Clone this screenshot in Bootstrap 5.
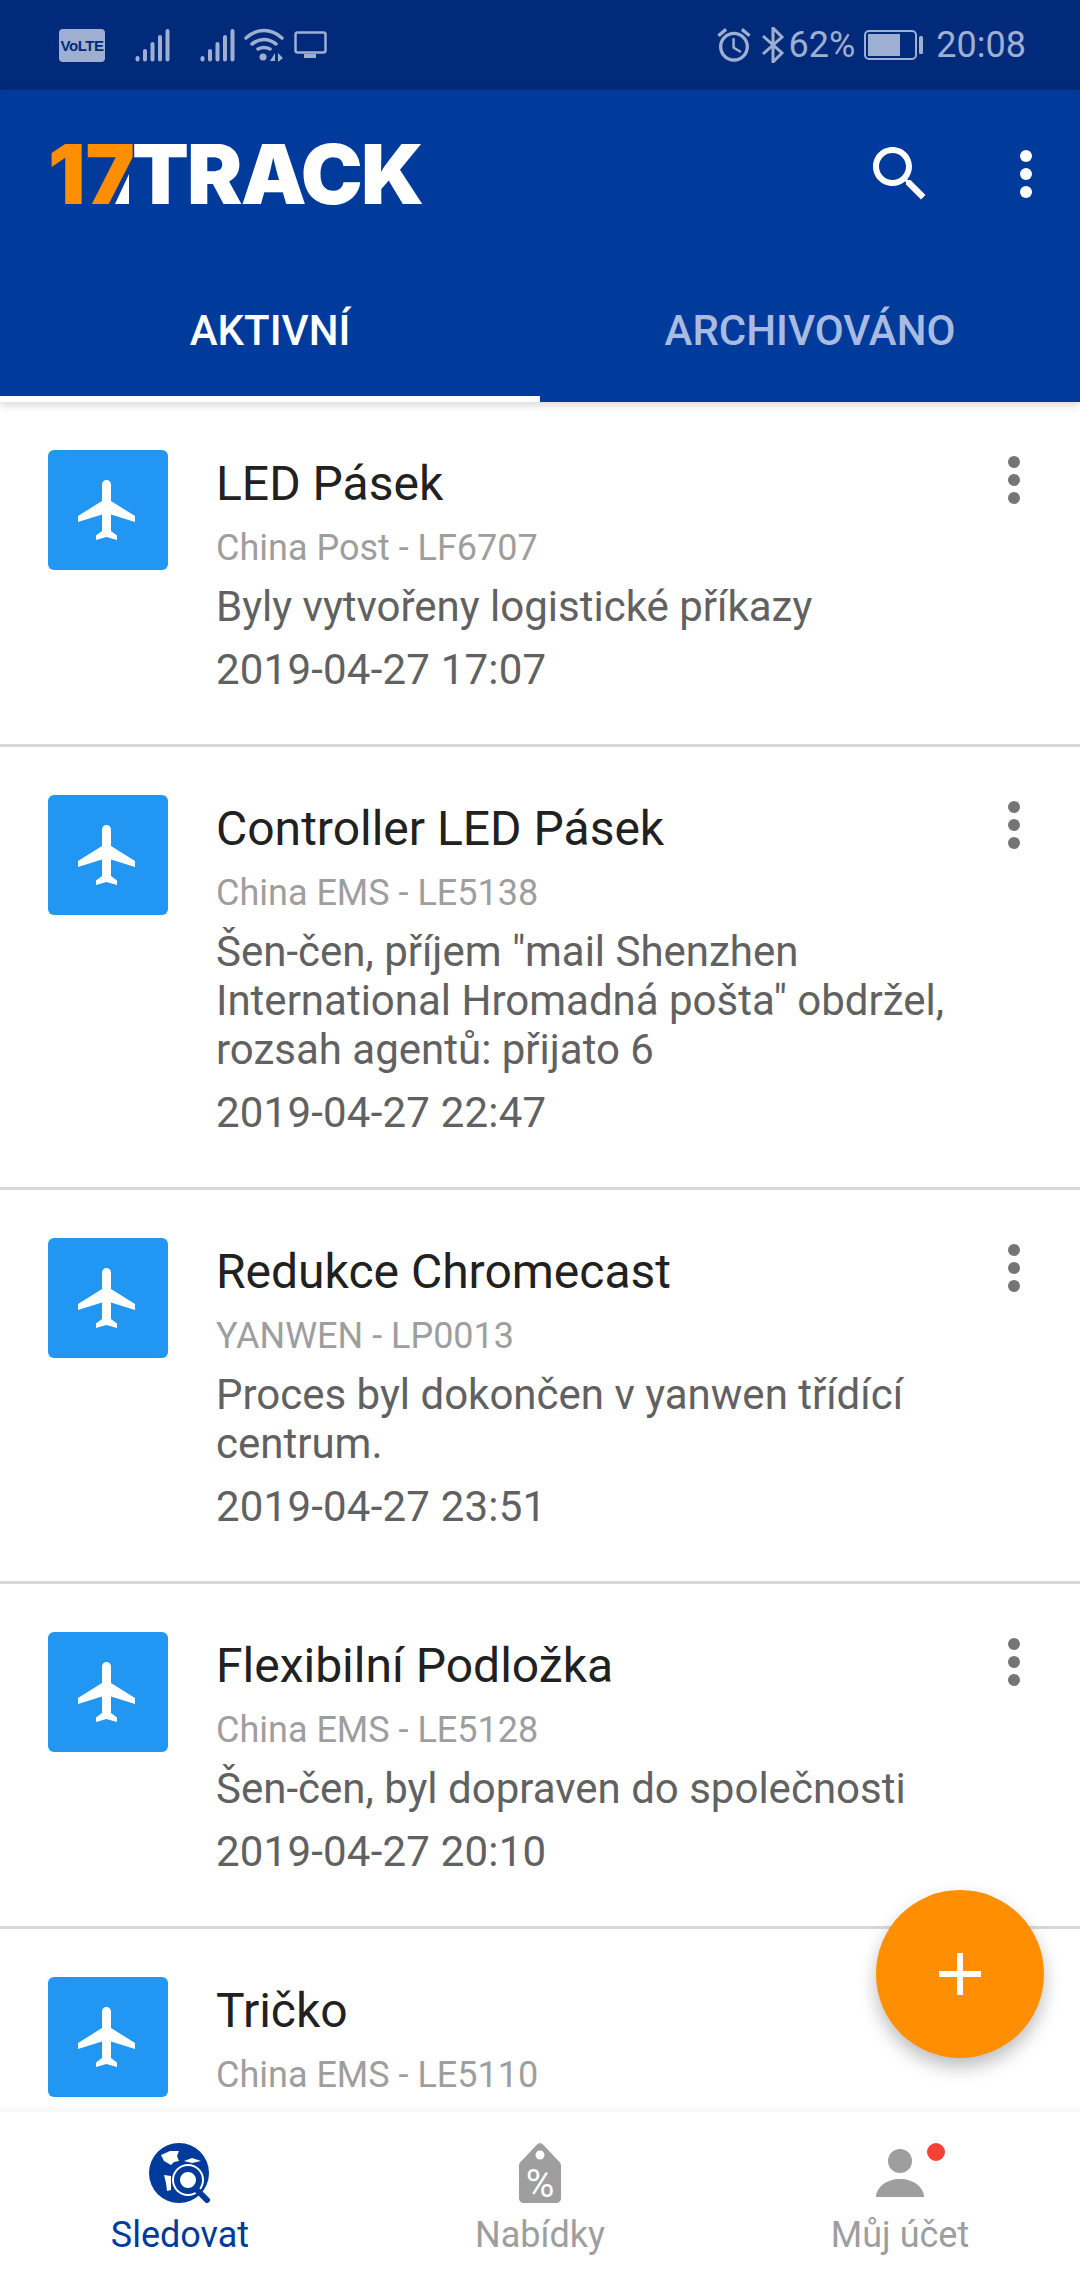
<!DOCTYPE html>
<html lang="cs">
<head>
  <meta charset="UTF-8">
  <title>17TRACK</title>
  <link href="https://cdn.jsdelivr.net/npm/bootstrap@5.3.0/dist/css/bootstrap.min.css" rel="stylesheet">
  <style>
    body { font-family: Roboto, "Liberation Sans", sans-serif; background: #fff; margin: 0; }
    .screen { width: 1080px; height: 2280px; overflow: hidden; position: relative; }

    .status-bar { height: 90px; background: #012a7b; color: #9fafd2; font-size: 36px; line-height: 1; padding: 0 54px 0 59px; }
    .status-bar svg { display: block; flex: none; }
    .volte-tag { width: 46px; height: 33px; background: #9fafd2; color: #012a7b; border-radius: 4px; font: 700 15px/33px "Liberation Sans", sans-serif; text-align: center; letter-spacing: -.5px; }
    .gap-signal { margin-left: 30px; }
    .gap-wifi { margin-left: 9px; }
    .gap-tv { margin-left: 10px; }
    .gap-bt { margin-left: 8px; }
    .gap-percent { margin-left: 5px; }
    .gap-battery { margin-left: 9px; }
    .gap-clock { margin-left: 12px; }

    .app-head { background: #003a9b; height: 312px; position: relative; z-index: 2; box-shadow: 0 3px 8px rgba(0, 0, 0, .16); }
    .app-row { height: 168px; padding: 0 48px; }
    .brand-logo { font: 900 83px/1 Inter, sans-serif; letter-spacing: -1.800px; color: #fff; position: relative; }
    .brand-logo span { color: #ff8f00; letter-spacing: 0; margin-right: -3px; }
    .brand-cut { position: absolute; left: 67px; top: 41px; }
    .app-search { margin-right: 84px; display: block; }

    .tab-strip { height: 144px; }
    .tab-strip .nav-link { padding: 48px 0 0; height: 144px; font-size: 42px; line-height: 50px; font-weight: 500; color: #a9bbe0; border-bottom: 6px solid transparent; border-radius: 0; }
    .tab-strip .nav-link.active { color: #fff; border-bottom-color: #fff; }

    .track-list { height: 1710px; overflow: hidden; }
    .track-list .list-group-item { padding: 48px 60px 50px 48px; border-color: #d8d7dd; border-width: 0 0 3px; gap: 48px; }
    .plane-box { width: 120px; height: 120px; background: #2196f3; border-radius: 6px; flex: none; }
    .track-title { font-size: 48px; line-height: 68px; color: #212121; }
    .track-sub { font-size: 36px; line-height: 60px; color: #9e9e9e; }
    .track-msg { font-size: 42px; line-height: 49px; color: #616161; margin-top: 4px; }
    .track-date { font-size: 42px; line-height: 49px; color: #616161; margin-top: 14px; letter-spacing: .2px; }
    .dots-btn { flex: none; margin-top: 6px; margin-left: -36px; }

    .add-fab { position: absolute; left: 876px; top: 1890px; width: 168px; height: 168px; border-radius: 50%; background: #ff8f00; box-shadow: 0 9px 18px rgba(0, 0, 0, .26); z-index: 3; border: 0; padding: 0; }

    .bottom-bar { height: 168px; background: #fff; position: relative; z-index: 2; box-shadow: 0 -2px 8px rgba(0, 0, 0, .05); }
    .bottom-item { width: 360px; padding-top: 31px; color: #9e9e9e; font-size: 36px; line-height: 44px; }
    .bottom-item svg { display: block; margin: 0 auto 10px; }
    .bottom-item.is-active { color: #003a9b; }
  </style>
</head>
<body>
  <svg width="0" height="0" class="position-absolute">
    <symbol id="i-plane" viewBox="0 0 24 24"><path fill="#fff" d="M21 16v-2l-8-5V3.500c0-.830-.670-1.500-1.500-1.500S10 2.670 10 3.500V9l-8 5v2l8-2.500V19l-2 1.500V22l3.500-1 3.500 1v-1.500L13 19v-5.500l8 2.500z"/></symbol>
    <symbol id="i-dots" viewBox="0 0 12 48"><circle cx="6" cy="6" r="6"/><circle cx="6" cy="24" r="6"/><circle cx="6" cy="42" r="6"/></symbol>
    <symbol id="i-signal" viewBox="0 0 35 34"><path fill="none" stroke="#9fafd2" stroke-width="4" stroke-linecap="round" d="M2.500 30v1.500M10 23v8.500M17.500 16v15.500M25 9v22.500M32.500 3v28.500"/></symbol>
  </svg>

  <div class="screen d-flex flex-column">
    <div class="status-bar d-flex align-items-center justify-content-between">
      <div class="d-flex align-items-center">
        <div class="volte-tag">VoLTE</div>
        <svg class="gap-signal" width="35" height="34"><use href="#i-signal"/></svg>
        <svg class="gap-signal" width="35" height="34"><use href="#i-signal"/></svg>
        <svg class="gap-wifi" width="40" height="34" viewBox="0 0 40 34" fill="none" stroke="#9fafd2" stroke-width="3.500" stroke-linecap="round">
          <path d="M2 10c11-10 25-10 36 0M8 16c8-6 16-6 24 0M14 21c4-2 8-2 12 0"/>
          <circle cx="19" cy="29" r="3.500" fill="#9fafd2" stroke="none"/>
          <path d="M31 25l-5 8h5zM34 25l5 5-5 4z" fill="#9fafd2" stroke="none"/>
        </svg>
        <svg class="gap-tv" width="33" height="28" viewBox="0 0 33 28" fill="none">
          <rect x="1.500" y="1.500" width="30" height="20" rx="2" stroke="#9fafd2" stroke-width="2.500"/>
          <rect x="10" y="23" width="12" height="4" fill="#9fafd2"/>
        </svg>
      </div>
      <div class="d-flex align-items-center">
        <svg width="40" height="40" viewBox="0 0 24 24" fill="#9fafd2"><path d="M22 5.720l-4.600-3.860-1.290 1.530 4.600 3.860L22 5.720zM7.880 3.390L6.600 1.860 2 5.710l1.290 1.530 4.590-3.850zM12.500 8H11v6l4.750 2.850.75-1.230-4-2.370V8zM12 4c-4.970 0-9 4.030-9 9s4.030 9 9 9 9-4.030 9-9-4.030-9-9-9zm0 16c-3.870 0-7-3.130-7-7s3.130-7 7-7 7 3.130 7 7-3.130 7-7 7z"/></svg>
        <svg class="gap-bt" width="22" height="36" viewBox="0 0 22 36" fill="none" stroke="#9fafd2" stroke-width="3"><path d="M1 9l19 17-9 9V1l9 9L1 27"/></svg>
        <span class="gap-percent">62%</span>
        <svg class="gap-battery" width="60" height="30" viewBox="0 0 60 30">
          <rect x="1" y="1" width="51" height="28" rx="4" fill="none" stroke="#9fafd2" stroke-width="2"/>
          <rect x="4" y="4" width="32" height="22" fill="#9fafd2"/>
          <rect x="55" y="6" width="4" height="18" rx="1.500" fill="#9fafd2"/>
        </svg>
        <span class="gap-clock">20:08</span>
      </div>
    </div>

    <div class="app-head">
      <div class="app-row d-flex align-items-center justify-content-between">
        <div class="brand-logo"><span>17</span>TRACK<svg class="brand-cut" width="14" height="30" viewBox="0 0 14 30"><path fill="#fff" d="M14 0v30H0z"/></svg></div>
        <div class="d-flex align-items-center">
          <svg class="app-search" width="72" height="72" viewBox="0 0 24 24"><path fill="#fff" d="M15.500 14h-.790l-.280-.270C15.410 12.590 16 11.110 16 9.500 16 5.910 13.090 3 9.500 3S3 5.910 3 9.500 5.910 16 9.500 16c1.610 0 3.090-.590 4.230-1.570l.270.280v.790l5 4.990L20.490 19l-4.990-5zm-6 0C7.010 14 5 11.990 5 9.500S7.010 5 9.500 5 14 7.010 14 9.500 11.990 14 9.500 14z"/></svg>
          <svg width="12" height="48" fill="#fff"><use href="#i-dots"/></svg>
        </div>
      </div>
      <ul class="nav nav-justified tab-strip">
        <li class="nav-item"><a class="nav-link active" href="#">AKTIVNÍ</a></li>
        <li class="nav-item"><a class="nav-link" href="#">ARCHIVOVÁNO</a></li>
      </ul>
    </div>

    <div class="list-group list-group-flush track-list" id="trackList"></div>

    <div class="bottom-bar d-flex text-center">
      <div class="bottom-item is-active">
        <svg width="62" height="60" viewBox="0 0 62 60">
          <circle cx="30" cy="30" r="30" fill="#003a9b"/>
          <path fill="#fff" d="M12 12l9-4 9 0-2 5 2 5-5 1-3 3-7-4zM15 32l7 1v14l-4 1-1-8zM35 18l8-3 9 3-9 2z"/>
          <circle cx="39" cy="37" r="16" fill="#fff"/>
          <circle cx="39" cy="37" r="11" fill="#fff" stroke="#003a9b" stroke-width="6"/>
          <path d="M47 46l11 11" stroke="#003a9b" stroke-width="6" stroke-linecap="round"/>
        </svg>
        Sledovat
      </div>
      <div class="bottom-item">
        <svg width="42" height="60" viewBox="0 0 42 60">
          <path fill="#9e9e9e" d="M21 0c1 0 2 .5 3 1.500l16 17c1.500 1.500 2 2.500 2 4.500v32c0 3-2 5-5 5H5c-3 0-5-2-5-5V23c0-2 .5-3 2-4.500l16-17C19 .5 20 0 21 0z"/>
          <circle cx="21" cy="12" r="4.500" fill="#fff"/>
          <text x="21" y="54" text-anchor="middle" font-family="Roboto, sans-serif" font-size="39" fill="#fff">%</text>
        </svg>
        Nabídky
      </div>
      <div class="bottom-item">
        <svg width="92" height="60" viewBox="0 0 92 60">
          <circle cx="46" cy="18" r="12" fill="#9e9e9e"/>
          <path fill="#9e9e9e" d="M22 54c0-10 11-18 24-18s24 8 24 18z"/>
          <circle cx="82" cy="9" r="9" fill="#f44336"/>
        </svg>
        Můj účet
      </div>
    </div>

    <button class="add-fab d-flex align-items-center justify-content-center" type="button">
      <svg width="42" height="42" viewBox="0 0 42 42"><path fill="#fff" d="M18 0h6v18h18v6H24v18h-6V24H0v-6h18z"/></svg>
    </button>
  </div>

  <script>
    const zasilky = [
      { nazev: 'LED Pásek', dopravce: 'China Post - LF6707', zprava: 'Byly vytvořeny logistické příkazy', datum: '2019-04-27 17:07' },
      { nazev: 'Controller LED Pásek', dopravce: 'China EMS - LE5138', zprava: 'Šen-čen, příjem "mail Shenzhen International Hromadná pošta" obdržel, rozsah agentů: přijato 6', datum: '2019-04-27 22:47' },
      { nazev: 'Redukce Chromecast', dopravce: 'YANWEN - LP0013', zprava: 'Proces byl dokončen v yanwen třídící centrum.', datum: '2019-04-27 23:51' },
      { nazev: 'Flexibilní Podložka', dopravce: 'China EMS - LE5128', zprava: 'Šen-čen, byl dopraven do společnosti', datum: '2019-04-27 20:10' },
      { nazev: 'Tričko', dopravce: 'China EMS - LE5110', zprava: '', datum: '' }
    ];

    const seznam = document.getElementById('trackList');
    zasilky.forEach(z => {
      const radek = document.createElement('div');
      radek.className = 'list-group-item d-flex';
      radek.innerHTML = `
        <div class="plane-box d-flex align-items-center justify-content-center">
          <svg width="72" height="72"><use href="#i-plane"/></svg>
        </div>
        <div class="flex-grow-1">
          <div class="track-title">${z.nazev}</div>
          <div class="track-sub">${z.dopravce}</div>
          <div class="track-msg">${z.zprava}</div>
          <div class="track-date">${z.datum}</div>
        </div>
        <svg class="dots-btn" width="12" height="48" fill="#757575"><use href="#i-dots"/></svg>
      `;
      seznam.appendChild(radek);
    });
  </script>
</body>
</html>
